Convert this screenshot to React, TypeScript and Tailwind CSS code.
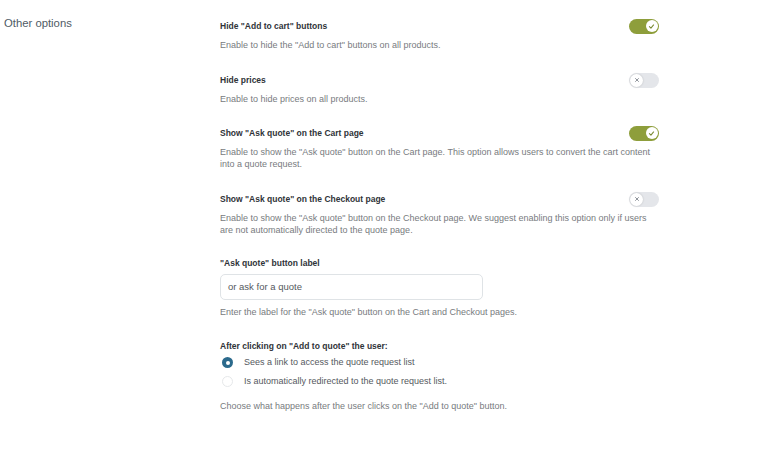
import React from 'react';

function Toggle({ on }: { on: boolean }) {
  if (on) {
    return (
      <div className="w-[30px] h-[15px] rounded-full bg-[#8e9e3b] flex items-center justify-end pr-[1.5px] shrink-0">
        <div className="w-[12px] h-[12px] rounded-full bg-white flex items-center justify-center">
          <svg viewBox="0 0 10 10" className="w-[7px] h-[7px]">
            <path d="M2 5.2 L4.2 7.3 L8 2.8" fill="none" stroke="#7a8a33" strokeWidth="1.5" strokeLinecap="round" strokeLinejoin="round" />
          </svg>
        </div>
      </div>
    );
  }
  return (
    <div className="w-[30px] h-[15px] rounded-full bg-[#e4e6ea] flex items-center pl-[1px] shrink-0">
      <div className="w-[13px] h-[13px] rounded-full bg-white shadow-[0_0_2px_rgba(0,0,0,0.2)] flex items-center justify-center">
        <svg viewBox="0 0 10 10" className="w-[6px] h-[6px]">
          <path d="M2.5 2.5 L7.5 7.5 M7.5 2.5 L2.5 7.5" fill="none" stroke="#8a8f96" strokeWidth="1.6" strokeLinecap="round" />
        </svg>
      </div>
    </div>
  );
}

function OptionRow({ title, desc, on, className }: { title: string; desc: React.ReactNode; on: boolean; className?: string }) {
  return (
    <div className={className}>
      <div className="flex items-center justify-between h-[14px]">
        <span className="text-[8.5px] font-bold text-[#2f3338]">{title}</span>
        <Toggle on={on} />
      </div>
      <p className="mt-[6px] text-[9px] leading-[12px] text-[#787b80]">{desc}</p>
    </div>
  );
}

export default function App() {
  return (
    <div className="w-[769px] h-[452px] bg-white flex" style={{ fontFamily: '"Liberation Sans", Arial, sans-serif' }}>
      <div className="w-[220px] pl-[4px] pt-[16px]">
        <div className="text-[11.3px] leading-[14px] text-[#4f5b66]">Other options</div>
      </div>
      <div className="w-[439px] pt-[19px]">
        <OptionRow title={'Hide "Add to cart" buttons'} desc={'Enable to hide the "Add to cart" buttons on all products.'} on />
        <OptionRow className="mt-[22px]" title="Hide prices" desc="Enable to hide prices on all products." on={false} />
        <OptionRow
          className="mt-[21px]"
          title={'Show "Ask quote" on the Cart page'}
          desc={<>Enable to show the "Ask quote" button on the Cart page. This option allows users to convert the cart content<br />into a quote request.</>}
          on
        />
        <OptionRow
          className="mt-[22px]"
          title={'Show "Ask quote" on the Checkout page'}
          desc={<>Enable to show the "Ask quote" button on the Checkout page. We suggest enabling this option only if users<br />are not automatically directed to the quote page.</>}
          on={false}
        />

        <div className="mt-[20px]">
          <div className="h-[14px] flex items-center text-[8.5px] font-bold text-[#2f3338]">"Ask quote" button label</div>
          <div className="mt-[4px] w-[263px] h-[26px] border border-[#dfe3e6] rounded-[5px] flex items-center px-[7px] text-[9.5px] text-[#55595e]">
            or ask for a quote
          </div>
          <p className="mt-[6px] text-[9px] leading-[12px] text-[#787b80]">Enter the label for the "Ask quote" button on the Cart and Checkout pages.</p>
        </div>

        <div className="mt-[21px]">
          <div className="h-[14px] flex items-center text-[8.5px] font-bold text-[#2f3338]">After clicking on "Add to quote" the user:</div>
          <div className="flex flex-col">
            <label className="h-[19px] flex items-center gap-[11px]">
              <span className="w-[11px] h-[11px] ml-[2px] rounded-full bg-[#2b6a8c] flex items-center justify-center">
                <span className="w-[4px] h-[4px] rounded-full bg-white" />
              </span>
              <span className="text-[9px] text-[#55595e]">Sees a link to access the quote request list</span>
            </label>
            <label className="h-[19px] flex items-center gap-[11px]">
              <span className="w-[11px] h-[11px] ml-[2px] rounded-full border border-[#e6e8ea] bg-white" />
              <span className="text-[9px] text-[#55595e]">Is automatically redirected to the quote request list.</span>
            </label>
          </div>
          <p className="mt-[9px] text-[9px] leading-[12px] text-[#787b80]">Choose what happens after the user clicks on the "Add to quote" button.</p>
        </div>
      </div>
    </div>
  );
}
